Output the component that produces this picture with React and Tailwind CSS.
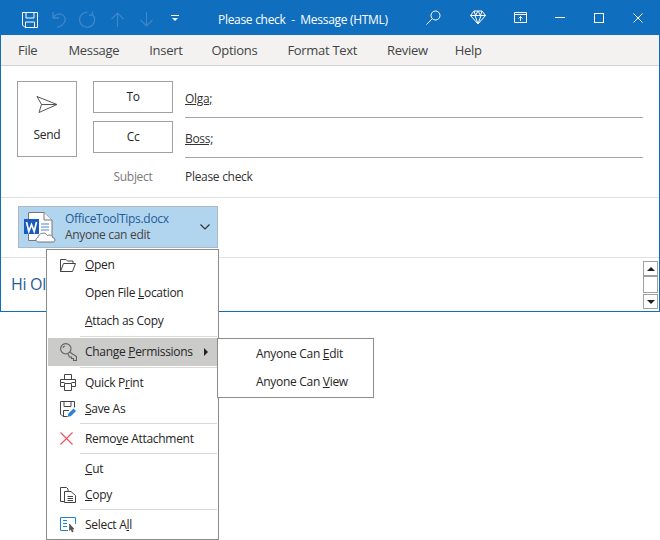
function TitleBar() {
  const c = "#3f87c9";
  return (
    <div className="flex h-[35px] items-center bg-[#106ebe] text-white pl-[21px] pt-[4px]">
      <svg width="16" height="16" viewBox="0 0 16 16" fill="none" stroke="#fff" strokeWidth="1">
        <path d="M0.5 0.5H15.5V15.5H3L0.5 13Z" />
        <path d="M4 0.5V6H12V0.5M3.5 15.5V10H12.5V15.5" />
      </svg>
      <svg width="14" height="17" viewBox="0 0 14 17" fill="none" stroke={c} strokeWidth="1.3" className="ml-[14px]">
        <path d="M1 1V7H7M1.5 6.5C3.5 3.5 7 2 10 3.5C13.5 5.5 14 9 12 12C11 14 8 15.5 5 16.5" />
      </svg>
      <svg width="17" height="17" viewBox="0 0 17 17" fill="none" stroke={c} strokeWidth="1.3" className="ml-[13px]">
        <path d="M13.5 3.5A7.5 7.5 0 1 1 8.5 1.2M13.5 0.5V4H10" />
      </svg>
      <svg width="13" height="15" viewBox="0 0 13 15" fill="none" stroke={c} strokeWidth="1.1" className="ml-[15px]">
        <path d="M6.5 15V1M0.5 7L6.5 1L12.5 7" />
      </svg>
      <svg width="13" height="15" viewBox="0 0 13 15" fill="none" stroke={c} strokeWidth="1.1" className="ml-[16px]">
        <path d="M6.5 0V14M0.5 8L6.5 14L12.5 8" />
      </svg>
      <svg width="8" height="7" viewBox="0 0 8 7" fill="none" className="ml-[18px] mb-[3px]">
        <path d="M0 0.5H8" stroke="#fff" />
        <path d="M1 3H7L4 6Z" fill="#fff" />
      </svg>
      <div className="ml-[39px] text-[12px] leading-none">Please check&nbsp; -&nbsp; Message (HTML)</div>
      <div className="ml-auto flex items-center -mt-[4px]">
        <svg width="15" height="15" viewBox="0 0 15 15" fill="none" stroke="#fff" strokeWidth="1">
          <circle cx="9.5" cy="5.5" r="4.5" />
          <path d="M6 9L0.5 14.5" />
        </svg>
        <svg width="16" height="15" viewBox="0 0 16 15" fill="none" stroke="#fff" strokeWidth="1" className="ml-[29px]">
          <path d="M4 1H12L15.5 5.5L8 14L0.5 5.5Z M0.5 5.5H15.5M5 5.5L8 14L11 5.5M4 1L5.5 5.5L8 1L10.5 5.5L12 1" />
        </svg>
        <svg width="13" height="11" viewBox="0 0 13 11" fill="none" stroke="#fff" strokeWidth="1" className="ml-[28px]">
          <path d="M0.5 0.5H12.5V10.5H0.5ZM0.5 2.5H12.5M6.5 9V4.5M4.5 6.5L6.5 4.5L8.5 6.5" />
        </svg>
        <svg width="10" height="1" viewBox="0 0 10 1" className="ml-[28px]"><path d="M0 0.5H10" stroke="#fff" /></svg>
        <svg width="10" height="10" viewBox="0 0 10 10" fill="none" stroke="#fff" className="ml-[29px]"><rect x="0.5" y="0.5" width="9" height="9" /></svg>
        <svg width="10" height="10" viewBox="0 0 10 10" fill="none" stroke="#fff" className="ml-[29px] mr-[16px]"><path d="M0.5 0.5L9.5 9.5M9.5 0.5L0.5 9.5" /></svg>
      </div>
    </div>
  );
}
function Tabs() {
  return (
    <div className="flex h-[31px] items-center bg-[#f3f2f1] border-b border-[#d2d0ce] pl-[17px] pt-[1px] text-[13px] tracking-[-0.3px] text-[#444]">
      <span>File</span>
      <span className="ml-[31px]">Message</span>
      <span className="ml-[30px]">Insert</span>
      <span className="ml-[29px]">Options</span>
      <span className="ml-[30px]">Format Text</span>
      <span className="ml-[30px]">Review</span>
      <span className="ml-[27px]">Help</span>
    </div>
  );
}
function BoxBtn({ className = "", children }) {
  return <div className={"border border-[#a0a0a0] flex items-center justify-center text-[12px] text-[#262626] " + className}>{children}</div>;
}
function Header() {
  return (
    <div className="flex h-[132px] border-b border-[#e1dfdd] pl-[16px] pt-[15px]">
      <BoxBtn className="w-[60px] h-[76px] flex-col">
        <svg width="22" height="20" viewBox="0 0 22 20" fill="none" stroke="#555" strokeWidth="1" className="mb-[11px]">
          <path d="M1 1.5L21 9.5L3 17.5L5.5 9.5ZM5.5 9.5H21" />
        </svg>
        <span>Send</span>
      </BoxBtn>
      <div className="ml-[16px] flex-1 pr-[16px] text-[12px] text-[#333]">
        <div className="flex h-[40px]">
          <BoxBtn className="w-[80px] h-[32px]">To</BoxBtn>
          <div className="ml-[12px] flex-1 h-[37px] border-b border-[#a6a6a6] pt-[9px]"><span className="underline underline-offset-[1px]">Olga;</span></div>
        </div>
        <div className="flex h-[40px]">
          <BoxBtn className="w-[80px] h-[32px]">Cc</BoxBtn>
          <div className="ml-[12px] flex-1 h-[37px] border-b border-[#a6a6a6] pt-[9px]"><span className="underline underline-offset-[1px]">Boss;</span></div>
        </div>
        <div className="flex h-[32px] items-center">
          <div className="w-[80px] text-center text-[#7a7a7a]">Subject</div>
          <div className="ml-[12px]">Please check</div>
        </div>
      </div>
    </div>
  );
}
function WordIcon() {
  return (
    <svg width="32" height="34" viewBox="0 0 32 34" fill="none">
      <path d="M4.5 2.5H20L28 10V30.5H4.5Z" fill="#fff" stroke="#777" />
      <path d="M20 2.5V10H28" stroke="#777" fill="#f5f5f5" />
      <path d="M17 14H25M17 17H25M17 20H25" stroke="#4a86c6" />
      <rect x="0" y="9" width="15" height="15" fill="#185abd" />
      <path d="M2.5 12L4.8 21.5L7.5 14.5L10.2 21.5L12.5 12" stroke="#fff" strokeWidth="1.7" />
      <path d="M14.5 32C11.5 32 11 28 14 27.5C14.5 23.5 20.5 21 23.5 25.5C27 24 29 26.5 28.5 27.5C32 28 31.5 32 29 32Z" fill="#fff" stroke="#777" />
    </svg>
  );
}
function Attachment() {
  return (
    <div className="flex h-[60px] border-b border-[#e1dfdd] pl-[17px] pt-[8px]">
      <div className="flex items-center w-[200px] h-[42px] bg-[#b1d5ee] border border-[#a9b9c6] pl-[5px]">
        <WordIcon />
        <div className="ml-[9px] text-[12px] leading-[16px]">
          <div className="text-[#1f5c99]">OfficeToolTips.docx</div>
          <div className="text-[#444]">Anyone can edit</div>
        </div>
        <svg width="10" height="6" viewBox="0 0 10 6" fill="none" stroke="#333" strokeWidth="1.2" className="ml-auto mr-[7px]">
          <path d="M0.5 0.5L5 5L9.5 0.5" />
        </svg>
      </div>
    </div>
  );
}
function Scrollbar() {
  return (
    <div className="absolute right-[1px] top-[3px] flex w-[15px] flex-col">
      <div className="flex h-[15px] items-center justify-center border border-[#a0a0a0] bg-white">
        <div className="h-0 w-0 border-x-[4px] border-b-[4px] border-x-transparent border-b-[#222]" />
      </div>
      <div className="h-[17px] border border-[#a0a0a0] bg-white" />
      <div className="mt-[1px] flex h-[15px] items-center justify-center border border-[#a0a0a0] bg-white">
        <div className="h-0 w-0 border-x-[4px] border-t-[4px] border-x-transparent border-t-[#222]" />
      </div>
    </div>
  );
}
const ic = { fill: "none", stroke: "#444", strokeWidth: 1 };
const Icons = {
  open: <svg width="16" height="13" viewBox="0 0 16 13" {...ic}><path d="M0.5 12.5V0.5H6L7.5 2H13V4.5M0.5 12.5H12.5L15.5 4.5H3.5L0.5 12.5Z" /></svg>,
  key: <svg width="17" height="18" viewBox="0 0 17 18" fill="none" stroke="#5f5f5f" strokeWidth="1.1"><circle cx="5.8" cy="5.8" r="5.2" /><path d="M3 5A2.5 2.5 0 0 1 5 3M9.5 9L16.5 13.5V17.5H13.5V15.5H11.5V14H9.5L8 11" /></svg>,
  print: <svg width="16" height="17" viewBox="0 0 16 17" {...ic}><path d="M4.5 5.5V0.5H11.5V5.5M4.5 12.5H0.5V5.5H15.5V12.5H11.5M4.5 9.5H11.5V16.5H4.5ZM0.5 8.5H4.5M11.5 8.5H15.5" /></svg>,
  saveas: <svg width="16" height="16" viewBox="0 0 16 16"><path d="M7.5 15.5H3L0.5 13V0.5H14.5V6.5M4 0.5V5.5H11V0.5M3.5 15V9.5H9" fill="none" stroke="#444" /><path d="M7.5 16L8.5 12.5L13.5 7.5L16 10L11 15Z" fill="#2a82d8" /></svg>,
  remove: <svg width="13" height="13" viewBox="0 0 13 13" fill="none" stroke="#e8505b" strokeWidth="1.1"><path d="M0.5 0.5L12.5 12.5M12.5 0.5L0.5 12.5" /></svg>,
  copy: <svg width="16" height="16" viewBox="0 0 16 16" {...ic}><path d="M4.5 14.5H0.5V0.5H6.5L8 2V4M4.5 4.5H11L15.5 8.5V15.5H4.5ZM7.5 9.5H13M7.5 11.5H13M7.5 13.5H13" /></svg>,
  select: <svg width="16" height="16" viewBox="0 0 16 16" fill="none"><path d="M8 13.5H0.5V0.5H15.5V7" stroke="#1a86d0" /><path d="M3 3.5H7M3 6.5H7M3 9.5H7" stroke="#1a86d0" /><path d="M9.5 7V13.5L11 12.3L12 15L13.2 14.5L12.2 12H14Z" fill="#555" stroke="#333" strokeWidth="0.5" /></svg>,
};
function Sep() {
  return (
    <div className="py-[1px]"><div className="ml-[32px] h-[1px] bg-[#d9d9d9]" /></div>
  );
}
function Item({ icon, h = 28, hi, children, arrow }) {
  return (
    <div className={"relative flex items-center " + (hi ? "bg-[#cbcbca]" : "")} style={{ height: h }}>
      <div className="flex w-[37px] shrink-0 items-center pl-[12px]">{icon && Icons[icon]}</div>
      <span>{children}</span>
      {arrow && <div className="absolute right-[9px] top-[10px] h-0 w-0 border-y-[4px] border-l-[4px] border-y-transparent border-l-[#222]" />}
    </div>
  );
}
function Menu() {
  return (
    <div className="absolute left-[46px] top-[249px] w-[173px] h-[291px] border border-[#8c8c8c] bg-white pl-[1px] pr-[1px] pt-[1px] text-[12px] text-[#262626] z-10">
      <Item icon="open"><u>O</u>pen</Item>
      <Item>Open File <u>L</u>ocation</Item>
      <Item><u>A</u>ttach as Copy</Item>
      <Sep />
      <Item icon="key" hi arrow>Change <u>P</u>ermissions</Item>
      <Sep />
      <Item icon="print" h={27}>Quick P<u>r</u>int</Item>
      <Item icon="saveas" h={26}><u>S</u>ave As</Item>
      <Sep />
      <Item icon="remove" h={27}>Remo<u>v</u>e Attachment</Item>
      <Sep />
      <Item h={27}><u>C</u>ut</Item>
      <Item icon="copy" h={26}><u>C</u>opy</Item>
      <Sep />
      <Item icon="select" h={27}>Select A<u>l</u>l</Item>
    </div>
  );
}
function Submenu() {
  return (
    <div className="absolute left-[217px] top-[338px] z-20 w-[157px] h-[60px] border border-[#8c8c8c] bg-white pl-[38px] text-[12px] text-[#262626]">
      <div className="flex h-[29px] items-center"><span>Anyone Can <u>E</u>dit</span></div>
      <div className="flex h-[28px] items-center"><span>Anyone Can <u>V</u>iew</span></div>
    </div>
  );
}
export default function App() {
  return (
    <div className="relative h-[540px] w-[660px] overflow-hidden bg-white font-['Open_Sans','Noto_Sans',sans-serif] tracking-[-0.3px]">
      <div className="h-[312px] border-x border-b border-[#106ebe]">
        <TitleBar />
        <Tabs />
        <Header />
        <Attachment />
        <div className="relative h-[53px]">
          <Scrollbar />
          <div className="pl-[10px] pt-[15px] text-[16px] leading-[22px] text-[#1f5c99]">Hi Olga,</div>
        </div>
      </div>
      <Menu />
      <Submenu />
    </div>
  );
}
